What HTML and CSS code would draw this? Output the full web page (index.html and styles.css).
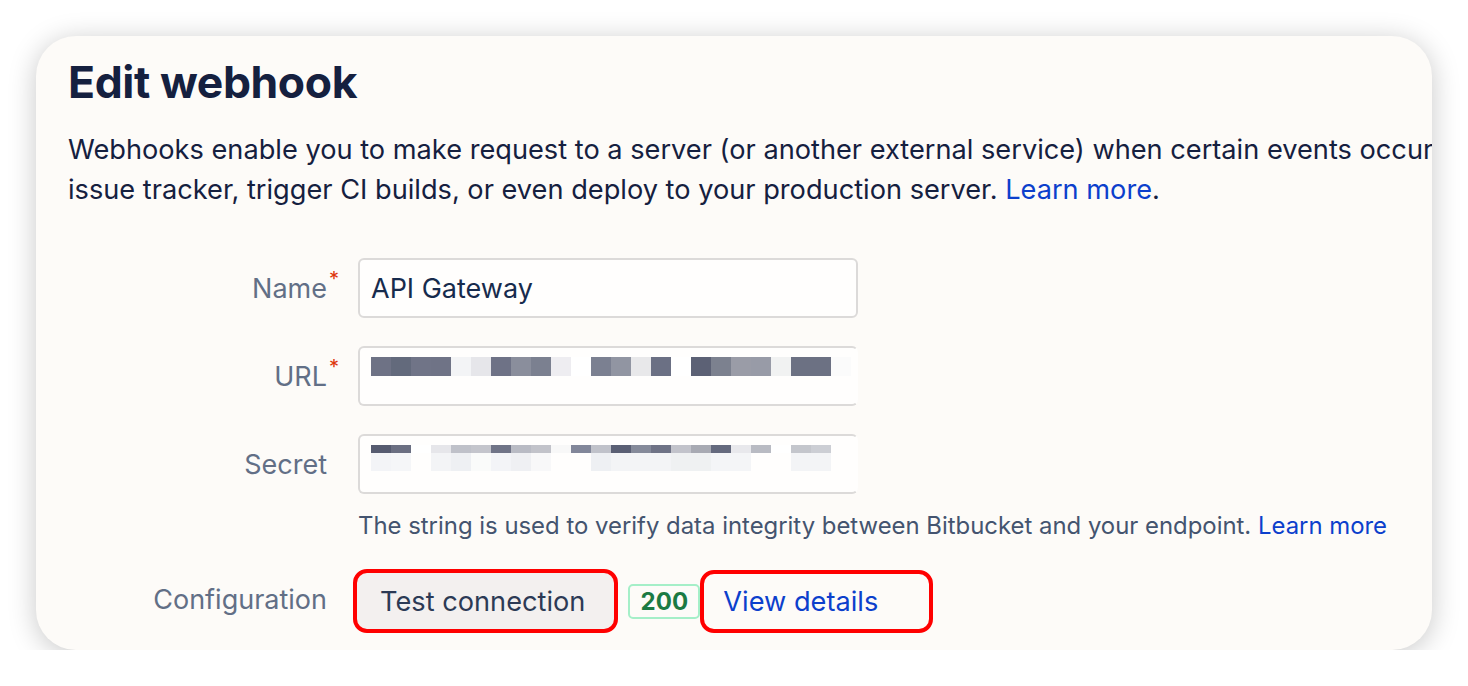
FILE: index.html
```html
<!DOCTYPE html>
<html lang="en">
<head>
   <meta charset="UTF-8">
   <meta name="viewport" content="width=device-width, initial-scale=1.0">
   <title>Edit webhook</title>
   <link rel="stylesheet" href="styles.css">
</head>
<body>
   <div class="card">
       <h1 class="title">Edit webhook</h1>
       <p class="intro"><span class="line">Webhooks enable you to make request to a server (or another external service) when certain events occur in your repository. Use them to update your</span><br>issue tracker, trigger CI builds, or even deploy to your production server. <a href="#">Learn more</a>.</p>

       <form class="form">
           <label class="label" for="name">Name<span class="req">*</span></label>
           <div class="field">
               <input class="input" id="name" type="text" value="API Gateway">
           </div>

           <label class="label" for="url">URL<span class="req">*</span></label>
           <div class="field">
               <div class="input redacted" id="url">
                   <div class="pix pix-url"></div>
               </div>
           </div>

           <label class="label" for="secret">Secret<span class="req-space"></span></label>
           <div class="field">
               <div class="input redacted" id="secret">
                   <div class="pix pix-secret-top"></div>
                   <div class="pix pix-secret-bottom"></div>
               </div>
               <div class="help">The string is used to verify data integrity between Bitbucket and your endpoint. <a href="#">Learn more</a></div>
           </div>

           <div class="label">Configuration<span class="req-space"></span></div>
           <div class="field config">
               <button type="button" class="btn">Test connection</button>
               <span class="badge">200</span>
               <a href="#" class="details">View details</a>
           </div>
       </form>
   </div>
</body>
</html>
```

FILE: styles.css
```css
body {
    margin: 0;
    background: #ffffff;
    font-family: Inter, "Noto Sans", sans-serif;
    color: #172b4d;
}
a {
    color: #0c3fcc;
    text-decoration: none;
}
.card {
    margin: 36px 0 0 36px;
    width: 1396px;
    height: 614px;
    box-sizing: border-box;
    padding: 14px 0 0 32px;
    background: #fdfbf8;
    border-radius: 40px;
    box-shadow: 0 4px 28px rgba(0,0,0,0.22);
    overflow: hidden;
}
.title {
    margin: 0;
    font-size: 44.5px;
    font-weight: 700;
    line-height: 64px;
    letter-spacing: -0.4px;
    color: #15203f;
}
.intro {
    margin: 16px 0 0;
    width: 2000px;
    font-size: 27.2px;
    line-height: 40px;
    color: #15203f;
    white-space: nowrap;
}
.form {
    display: grid;
    grid-template-columns: 270px 500px;
    column-gap: 20px;
    row-gap: 28px;
    margin-top: 48px;
    align-items: start;
}
.label {
    height: 60px;
    display: flex;
    align-items: center;
    justify-content: flex-end;
    font-size: 27px;
    color: #626f86;
}
.req {
    align-self: flex-start;
    margin-top: 11px;
    margin-left: 2px;
    color: #de350b;
    font-size: 20px;
    line-height: 20px;
    width: 9px;
}
.req-space {
    width: 11px;
}
.input {
    display: block;
    width: 500px;
    height: 60px;
    box-sizing: border-box;
    padding: 0 11px;
    border: 2px solid #dcdad9;
    border-radius: 6px;
    background: #fffefd;
    font-family: inherit;
    font-size: 27px;
    color: #172b4d;
    outline: none;
}
.redacted {
    padding-top: 9px;
    border-right-color: transparent;
}
.pix {
    height: 19px;
    width: 480px;
}
.pix-url {
    background: linear-gradient(to right,
        #6e7285 0 20px, #636a7c 20px 40px, #707487 40px 60px, #6f7386 60px 80px,
        #f3f4f6 80px 100px, #e6e6ea 100px 120px, #6e7286 120px 140px, #8a8e9c 140px 160px,
        #7b8090 160px 180px, #eeedf1 180px 200px, #ffffff 200px 220px, #7b8091 220px 240px,
        #9195a2 240px 260px, #e8e8ea 260px 280px, #6b7084 280px 300px, #ffffff 300px 320px,
        #5c6175 320px 340px, #7c818f 340px 360px, #9a9ca7 360px 380px, #989ba7 380px 400px,
        #f1f2f2 400px 420px, #6c7183 420px 440px, #6c7183 440px 460px, #fbfbfb 460px 480px);
}
.pix-secret-top {
    height: 8px;
    background: linear-gradient(to right,
        #565b70 0 20px, #6b6f82 20px 40px, #ffffff 40px 60px, #e6e6ea 60px 80px,
        #bfc1c9 80px 100px, #c4c5cc 100px 120px, #707487 120px 140px, #b9bbc4 140px 160px,
        #c2c3ca 160px 180px, #f8f8f8 180px 200px, #82879a 200px 220px, #c0c2ca 220px 240px,
        #5a5f74 240px 260px, #858a9a 260px 280px, #6f7386 280px 300px, #c2c3cb 300px 320px,
        #a8aab3 320px 340px, #656a7e 340px 360px, #e8e8ec 360px 380px, #b9bbc3 380px 400px,
        #ffffff 400px 420px, #c4c6cc 420px 440px, #ccced4 440px 460px, #fffefd 460px 480px);
}
.pix-secret-bottom {
    height: 18px;
    background: linear-gradient(to right,
        #f3f4f7 0 20px, #f5f6f8 20px 40px, #fffefd 40px 60px, #f3f4f6 60px 80px,
        #eef0f3 80px 100px, #fafbfa 100px 120px, #f3f4f7 120px 140px, #eff0f3 140px 160px,
        #f8f8f9 160px 180px, #fffefd 180px 220px, #eef0f3 220px 240px, #f3f4f6 240px 300px,
        #eff1f2 300px 340px, #f4f5f7 340px 380px, #fffefd 380px 420px, #f3f4f6 420px 460px,
        #fffefd 460px 480px);
}
.help {
    margin-top: 17px;
    width: 1100px;
    font-size: 23.9px;
    line-height: 30px;
    color: #44546f;
}
.config {
    display: flex;
    align-items: center;
    height: 64px;
}
.btn {
    flex-shrink: 0;
    white-space: nowrap;
    height: 64px;
    box-sizing: border-box;
    padding: 0 29px 0 23px;
    border: 4px solid #ff0000;
    border-radius: 14px;
    background: #f3f0ef;
    font-family: inherit;
    font-size: 27.2px;
    color: #2c3a55;
    margin-left: -5px;
}
.badge {
    flex-shrink: 0;
    margin-left: 10px;
    width: 72px;
    height: 35px;
    box-sizing: border-box;
    border: 2px solid #a5efc8;
    border-radius: 5px;
    display: flex;
    align-items: center;
    justify-content: center;
    font-size: 24px;
    font-weight: 700;
    color: #1b7a43;
}
.details {
    flex-shrink: 0;
    white-space: nowrap;
    height: 63px;
    width: 233px;
    box-sizing: border-box;
    padding-left: 19px;
    border: 4px solid #ff0000;
    border-radius: 14px;
    display: flex;
    align-items: center;
    font-size: 27.2px;
}
```
